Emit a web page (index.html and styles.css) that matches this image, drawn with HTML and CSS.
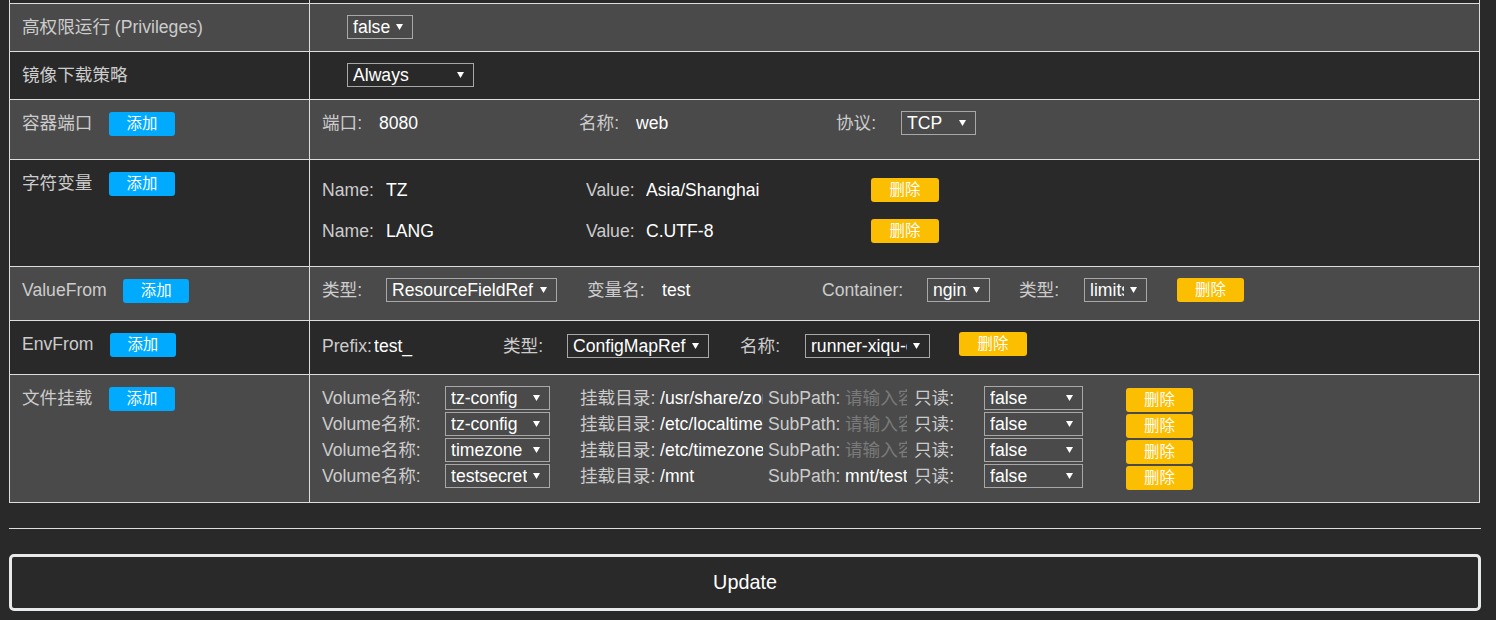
FILE: index.html
```html
<!DOCTYPE html>
<html lang="zh">
<head>
<meta charset="utf-8">
<title>Container settings</title>
<link rel="stylesheet" href="styles.css">
</head>
<body>
<div class="page">
  <table class="form">
    <colgroup><col class="col-l"><col class="col-r"></colgroup>
    <tr class="cut"><td></td><td></td></tr>

    <tr class="gray">
      <td>高权限运行 (Privileges)</td>
      <td>
        <div class="line">
          <span class="sel w66 ml25"><span class="sv">false</span><svg class="arr" viewBox="0 0 7 6"><path d="M0 0H7L3.5 6Z"/></svg></span>
        </div>
      </td>
    </tr>

    <tr>
      <td>镜像下载策略</td>
      <td>
        <div class="line">
          <span class="sel w127 ml25"><span class="sv">Always</span><svg class="arr" viewBox="0 0 7 6"><path d="M0 0H7L3.5 6Z"/></svg></span>
        </div>
      </td>
    </tr>

    <tr class="gray">
      <td class="pb24"><div class="lab">容器端口<span class="btn add">添加</span></div></td>
      <td class="pb24">
        <div class="line">
          <span class="lbl w57">端口:</span><span class="val w200">8080</span>
          <span class="lbl w57">名称:</span><span class="val w200">web</span>
          <span class="lbl w65">协议:</span>
          <span class="sel w75"><span class="sv">TCP</span><svg class="arr" viewBox="0 0 7 6"><path d="M0 0H7L3.5 6Z"/></svg></span>
        </div>
      </td>
    </tr>

    <tr>
      <td class="pb23"><div class="lab">字符变量<span class="btn add">添加</span></div></td>
      <td class="pb23">
        <div class="line env first">
          <span class="lbl w64">Name:</span><span class="val w200">TZ</span>
          <span class="lbl w60">Value:</span><span class="val w225">Asia/Shanghai</span>
          <span class="btn del w68">删除</span>
        </div>
        <div class="line env">
          <span class="lbl w64">Name:</span><span class="val w200">LANG</span>
          <span class="lbl w60">Value:</span><span class="val w225">C.UTF-8</span>
          <span class="btn del w68">删除</span>
        </div>
      </td>
    </tr>

    <tr class="gray">
      <td class="pb18"><div class="lab">ValueFrom<span class="btn add">添加</span></div></td>
      <td class="pb18">
        <div class="line">
          <span class="lbl w64">类型:</span>
          <span class="sel w171 mr30"><span class="sv">ResourceFieldRef</span><svg class="arr" viewBox="0 0 7 6"><path d="M0 0H7L3.5 6Z"/></svg></span>
          <span class="lbl w75">变量名:</span><span class="val w160">test</span>
          <span class="lbl w105">Container:</span>
          <span class="sel w63 mr29"><span class="sv">nginx</span><svg class="arr" viewBox="0 0 7 6"><path d="M0 0H7L3.5 6Z"/></svg></span>
          <span class="lbl w65">类型:</span>
          <span class="sel w63 mr30"><span class="sv">limits.cpu</span><svg class="arr" viewBox="0 0 7 6"><path d="M0 0H7L3.5 6Z"/></svg></span>
          <span class="btn del w67">删除</span>
        </div>
      </td>
    </tr>

    <tr>
      <td class="pb18"><div class="lab">EnvFrom<span class="btn add">添加</span></div></td>
      <td class="pb16">
        <div class="line shift2">
          <span class="lbl w52">Prefix:</span><span class="val w129">test_</span>
          <span class="lbl w64">类型:</span>
          <span class="sel w142 mr31"><span class="sv">ConfigMapRef</span><svg class="arr" viewBox="0 0 7 6"><path d="M0 0H7L3.5 6Z"/></svg></span>
          <span class="lbl w65">名称:</span>
          <span class="sel w125 mr29"><span class="sv">runner-xiqu-config</span><svg class="arr" viewBox="0 0 7 6"><path d="M0 0H7L3.5 6Z"/></svg></span>
          <span class="btn del w68 up2">删除</span>
        </div>
      </td>
    </tr>

    <tr class="gray">
      <td class="pb12"><div class="lab">文件挂载<span class="btn add">添加</span></div></td>
      <td class="pb12">
        <div class="line vol">
          <span class="lbl w123">Volume名称:</span>
          <span class="sel w105 mr30"><span class="sv">tz-config</span><svg class="arr" viewBox="0 0 7 6"><path d="M0 0H7L3.5 6Z"/></svg></span>
          <span class="lbl w80">挂载目录:</span><span class="val w103 mr5">/usr/share/zoneinfo</span>
          <span class="lbl w77">SubPath:</span><span class="val ph w62 mr7">请输入容器内路径</span>
          <span class="lbl w70">只读:</span>
          <span class="sel w99 mr43"><span class="sv">false</span><svg class="arr" viewBox="0 0 7 6"><path d="M0 0H7L3.5 6Z"/></svg></span>
          <span class="btn del w67 dn2">删除</span>
        </div>
        <div class="line vol">
          <span class="lbl w123">Volume名称:</span>
          <span class="sel w105 mr30"><span class="sv">tz-config</span><svg class="arr" viewBox="0 0 7 6"><path d="M0 0H7L3.5 6Z"/></svg></span>
          <span class="lbl w80">挂载目录:</span><span class="val w103 mr5">/etc/localtime</span>
          <span class="lbl w77">SubPath:</span><span class="val ph w62 mr7">请输入容器内路径</span>
          <span class="lbl w70">只读:</span>
          <span class="sel w99 mr43"><span class="sv">false</span><svg class="arr" viewBox="0 0 7 6"><path d="M0 0H7L3.5 6Z"/></svg></span>
          <span class="btn del w67 dn2">删除</span>
        </div>
        <div class="line vol">
          <span class="lbl w123">Volume名称:</span>
          <span class="sel w105 mr30"><span class="sv">timezone</span><svg class="arr" viewBox="0 0 7 6"><path d="M0 0H7L3.5 6Z"/></svg></span>
          <span class="lbl w80">挂载目录:</span><span class="val w103 mr5">/etc/timezone</span>
          <span class="lbl w77">SubPath:</span><span class="val ph w62 mr7">请输入容器内路径</span>
          <span class="lbl w70">只读:</span>
          <span class="sel w99 mr43"><span class="sv">false</span><svg class="arr" viewBox="0 0 7 6"><path d="M0 0H7L3.5 6Z"/></svg></span>
          <span class="btn del w67 dn2">删除</span>
        </div>
        <div class="line vol">
          <span class="lbl w123">Volume名称:</span>
          <span class="sel w105 mr30"><span class="sv">testsecret</span><svg class="arr" viewBox="0 0 7 6"><path d="M0 0H7L3.5 6Z"/></svg></span>
          <span class="lbl w80">挂载目录:</span><span class="val w103 mr5">/mnt</span>
          <span class="lbl w77">SubPath:</span><span class="val w62 mr7">mnt/test</span>
          <span class="lbl w70">只读:</span>
          <span class="sel w99 mr43"><span class="sv">false</span><svg class="arr" viewBox="0 0 7 6"><path d="M0 0H7L3.5 6Z"/></svg></span>
          <span class="btn del w67 dn2">删除</span>
        </div>
      </td>
    </tr>
  </table>

  <hr class="sep">
  <button class="update" type="button">Update</button>
</div>
</body>
</html>
```

FILE: styles.css
```css
* { box-sizing: border-box; }

body {
  margin: 0;
  background: #292929;
  font-family: "Liberation Sans", "Noto Sans CJK SC", sans-serif;
  font-size: 17.6px;
  color: #cccccc;
  overflow: hidden;
}

.page {
  width: 1481px;
  padding-left: 9px;
}

.form {
  width: 1471px;
  border-collapse: collapse;
  table-layout: fixed;
}

.col-l { width: 300px; }

.form td {
  border: 1px solid #dddddd;
  padding: 11px 12px 12px;
  vertical-align: top;
  line-height: 24px;
  background: #292929;
  white-space: nowrap;
}

.form tr.gray td { background: #4a4a4a; }

.form tr.cut td {
  border-top: 0;
  padding: 0;
  height: 3px;
}

.pb24 { padding-bottom: 24px !important; }
.pb23 { padding-bottom: 23px !important; }
.pb18 { padding-bottom: 18px !important; }
.pb16 { padding-bottom: 16px !important; }
.pb12 { padding-bottom: 12px !important; }

.lab {
  display: flex;
  align-items: flex-start;
  height: 24px;
}

.line {
  display: flex;
  align-items: flex-start;
  height: 24px;
}

.line.env { margin-top: 17px; }
.line.env.first { margin-top: 7px; }
.line.shift2 { margin-top: 2px; }
.line.vol { height: 26px; }

.lbl {
  flex: none;
  color: #cccccc;
  overflow: hidden;
}

.val {
  flex: none;
  color: #ffffff;
  overflow: hidden;
  white-space: nowrap;
}

.val.ph { color: #7a7a7a; }

.sel {
  flex: none;
  display: inline-flex;
  align-items: center;
  height: 24px;
  border: 1px solid #a8a8a8;
  padding: 0 9px 0 5px;
  color: #ffffff;
  line-height: 22px;
}

.sv {
  flex: 1;
  min-width: 0;
  overflow: hidden;
  white-space: nowrap;
}

.arr {
  flex: none;
  width: 7px;
  height: 6px;
  margin-left: 6px;
  fill: #ffffff;
}

.btn {
  flex: none;
  display: inline-block;
  height: 24px;
  line-height: 24px;
  border-radius: 3px;
  color: #ffffff;
  font-size: 15.4px;
  text-align: center;
}

.add {
  width: 66px;
  margin-left: 16.5px;
  margin-top: 1px;
  background: #00abff;
}

.del { background: #fcbe00; }
.up2 { margin-top: -2px; }
.dn2 { margin-top: 2px; }

.w52 { width: 52px; }
.w57 { width: 57px; }
.w60 { width: 60px; }
.w62 { width: 62px; }
.w63 { width: 63px; }
.w64 { width: 64px; }
.w65 { width: 65px; }
.w66 { width: 66px; }
.w67 { width: 67px; }
.w68 { width: 68px; }
.w70 { width: 70px; }
.w75 { width: 75px; }
.w77 { width: 77px; }
.w80 { width: 80px; }
.w99 { width: 99px; }
.w103 { width: 103px; }
.w105 { width: 105px; }
.w123 { width: 123px; }
.w125 { width: 125px; }
.w127 { width: 127px; }
.w129 { width: 129px; }
.w142 { width: 142px; }
.w160 { width: 160px; }
.w171 { width: 171px; }
.w200 { width: 200px; }
.w225 { width: 225px; }

.ml25 { margin-left: 25px; }
.mr5 { margin-right: 5px; }
.mr7 { margin-right: 7px; }
.mr29 { margin-right: 29px; }
.mr30 { margin-right: 30px; }
.mr31 { margin-right: 31px; }
.mr43 { margin-right: 43px; }

.sep {
  width: 1472px;
  border: 0;
  border-top: 1px solid #dddddd;
  margin: 25px 0;
}

.update {
  display: block;
  width: 1472px;
  height: 57px;
  border: 3px solid #e8e9eb;
  border-radius: 5px;
  background: #292929;
  color: #ffffff;
  font-family: "Liberation Sans", "Noto Sans CJK SC", sans-serif;
  font-size: 19.8px;
}
```
